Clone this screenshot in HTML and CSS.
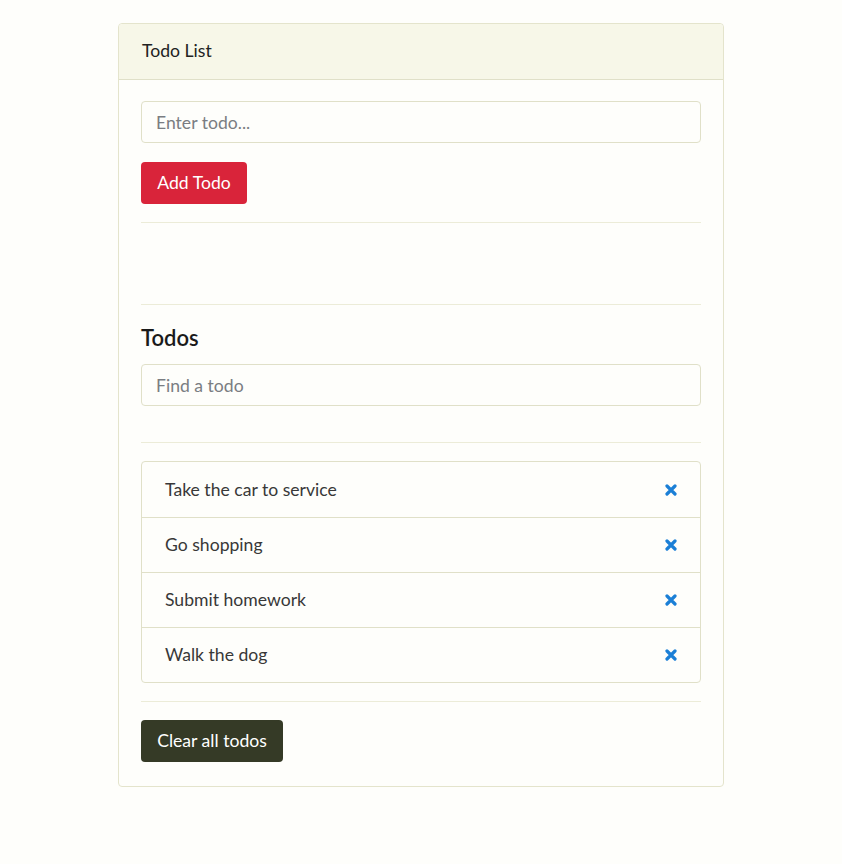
FILE: index.html
```html
<!DOCTYPE html>
<html lang="en">
<head>
<meta charset="utf-8">
<title>Todo List</title>
<link rel="stylesheet" href="styles.css">
</head>
<body>
<div class="card">
  <div class="card-header">Todo List</div>
  <div class="card-body">
    <input class="field" type="text" placeholder="Enter todo...">
    <button class="btn btn-danger add-btn">Add Todo</button>
    <hr class="rule rule-first">
    <div class="spacer"></div>
    <hr class="rule">
    <h5 class="title">Todos</h5>
    <input class="field" type="text" placeholder="Find a todo">
    <hr class="rule rule-search">
    <ul class="list">
      <li class="item"><span>Take the car to service</span><svg class="del" viewBox="0 0 12 12" width="12" height="12"><path d="M2 2 L10 10 M10 2 L2 10" stroke="#1b7fd6" stroke-width="3.2" stroke-linecap="round"/></svg></li>
      <li class="item"><span>Go shopping</span><svg class="del" viewBox="0 0 12 12" width="12" height="12"><path d="M2 2 L10 10 M10 2 L2 10" stroke="#1b7fd6" stroke-width="3.2" stroke-linecap="round"/></svg></li>
      <li class="item"><span>Submit homework</span><svg class="del" viewBox="0 0 12 12" width="12" height="12"><path d="M2 2 L10 10 M10 2 L2 10" stroke="#1b7fd6" stroke-width="3.2" stroke-linecap="round"/></svg></li>
      <li class="item"><span>Walk the dog</span><svg class="del" viewBox="0 0 12 12" width="12" height="12"><path d="M2 2 L10 10 M10 2 L2 10" stroke="#1b7fd6" stroke-width="3.2" stroke-linecap="round"/></svg></li>
    </ul>
    <hr class="rule">
    <button class="btn btn-dark">Clear all todos</button>
  </div>
</div>
</body>
</html>
```

FILE: styles.css
```css
* { box-sizing: border-box; }
html, body { margin: 0; padding: 0; }
body {
  background: #fefefb;
  font-family: "Lato", "Noto Sans", sans-serif;
  font-size: 17.6px;
  line-height: 26.4px;
  color: #212529;
}
.card {
  width: 606px;
  margin: 23px 0 0 118px;
  border: 1px solid #e4e4cc;
  border-radius: 4px;
  background: #fefefb;
}
.card-header {
  height: 56px;
  padding: 14px 22px 0 23px;
  background: #f7f7e8;
  border-bottom: 1px solid #e0e0c8;
  border-radius: 4px 4px 0 0;
  color: #222;
}
.card-body {
  padding: 21px 22px 24px 22px;
  display: flex;
  flex-direction: column;
  align-items: flex-start;
}
.field {
  width: 100%;
  height: 42px;
  padding: 0 14px;
  border: 1px solid #e0e0c8;
  border-radius: 4px;
  background: #fefefb;
  font: inherit;
  color: #495057;
}
.field::placeholder { color: #7a7d82; }
.btn {
  height: 42px;
  padding: 0 14px;
  border: 1px solid transparent;
  border-radius: 4px;
  font: inherit;
  color: #fff;
}
.add-btn { margin-top: 19px; }
.btn-danger { background: #d9243a; width: 106px; }
.btn-dark { background: #353a26; width: 142px; }
.rule {
  width: 100%;
  margin: 18px 0;
  border: 0;
  border-top: 1px solid #ececd8;
  height: 0;
}
.spacer { height: 45px; }
.title {
  margin: 2px 0 13px;
  font-size: 22px;
  line-height: 26.4px;
  font-weight: 600;
  color: #1a1a1a;
}
.rule-search { margin-top: 36px; }
.list {
  width: 100%;
  margin: 0;
  padding: 0;
  list-style: none;
  border: 1px solid #e0e0c8;
  border-radius: 4px;
}
.item {
  height: 55px;
  padding: 0 23px 0 23px;
  display: flex;
  align-items: center;
  justify-content: space-between;
  border-top: 1px solid #e0e0c8;
  color: #383838;
}
.item:first-child { border-top: 0; }
.del { display: block; }
```
